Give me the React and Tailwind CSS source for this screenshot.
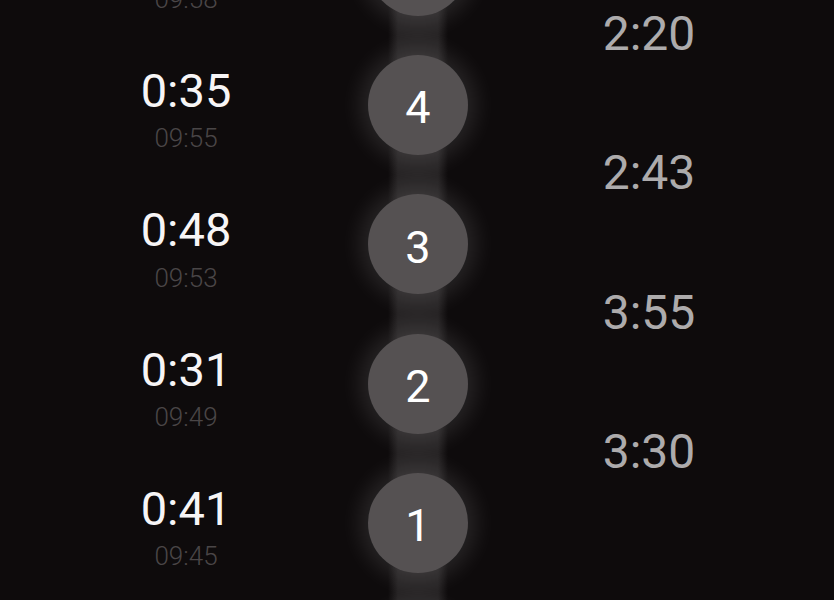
import React from "react";

const rows = [
  { n: 5, big: "0:52", small: "09:58" },
  { n: 4, big: "0:35", small: "09:55" },
  { n: 3, big: "0:48", small: "09:53" },
  { n: 2, big: "0:31", small: "09:49" },
  { n: 1, big: "0:41", small: "09:45" },
  { n: 0, big: "", small: "" },
];

const totals = ["2:20", "2:43", "3:55", "3:30"];

export default function App() {
  return (
    <div
      className="h-[600px] w-[834px] overflow-hidden bg-[#0e0b0c]"
      style={{ fontFamily: "Roboto, 'Noto Sans', sans-serif" }}
    >
      <div className="mt-[-104px] flex items-start">
        {/* left column */}
        <div className="flex w-[372px] flex-col">
          {rows.map((r) => (
            <div key={r.n} className="flex h-[139.33px] shrink-0 flex-col items-center pt-[31.8px]">
              <div className="h-[48px] text-[47px] leading-[48px] text-[#f7f5f6]">{r.big}</div>
              <div className="mt-[10.2px] h-[26px] text-[26px] font-light leading-[26px] text-[#4a4647]">
                {r.small}
              </div>
            </div>
          ))}
        </div>

        {/* center column */}
        <div className="flex w-[92px] flex-col items-center bg-[linear-gradient(to_right,transparent_16px,#262324_26px,#262324_66px,transparent_76px)]">
          {rows.map((r) => (
            <div key={r.n} className="flex h-[139.33px] w-full shrink-0 items-center justify-center">
              <div className="flex h-[100px] w-[100px] shrink-0 items-center justify-center rounded-full bg-[#555152] pt-[6px] text-[45px] leading-none text-white shadow-[0_0_22px_8px_rgba(255,255,255,0.11)]">
                {r.n > 0 ? r.n : ""}
              </div>
            </div>
          ))}
        </div>

        {/* right column */}
        <div className="flex w-[370px] flex-col pt-[68.5px]">
          {totals.map((t) => (
            <div key={t} className="flex h-[139.33px] shrink-0 items-center justify-center">
              <div className="h-[48px] text-[48px] leading-[48px] text-[#adabac]">{t}</div>
            </div>
          ))}
        </div>
      </div>
    </div>
  );
}
